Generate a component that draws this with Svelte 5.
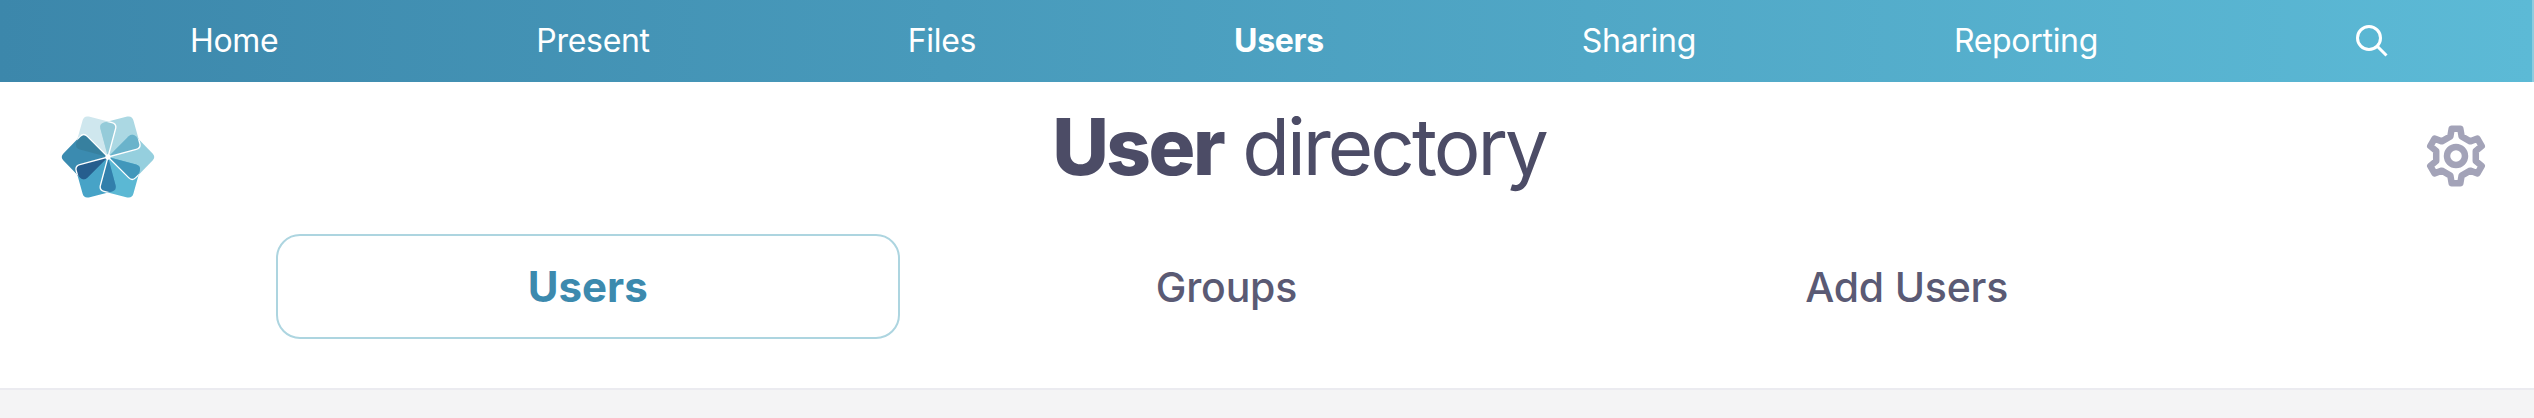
<script>
  const links = [
    { label: 'Home' },
    { label: 'Present' },
    { label: 'Files' },
    { label: 'Users', active: true },
    { label: 'Sharing' },
    { label: 'Reporting' }
  ];

  const petalPath = 'M0 0 L20.25 -20.25 Q23.75 -23.75 27.25 -20.25 L43.7 -3.5 Q47 0 43.7 3.5 L27.25 20.25 Q23.75 23.75 20.25 20.25 Z';
  const petals = [
    { a: -120, base: '#cfe7ee', over: '#95cbd9' },
    { a: -60, base: '#abd8e3', over: '#6ab3cb' },
    { a: 0, base: '#95cfde', over: '#4197bb' },
    { a: 60, base: '#5bb8d4', over: '#327fab' },
    { a: 120, base: '#47a3c7', over: '#265e8e' },
    { a: 180, base: '#3b8bb0', over: '#37809f' }
  ];

  function gearPath() {
    const cx = 31, cy = 31, outer = 27.6, inner = 20.4;
    const pt = (r, deg) => {
      const t = (deg * Math.PI) / 180;
      return `${(cx + r * Math.cos(t)).toFixed(2)} ${(cy + r * Math.sin(t)).toFixed(2)}`;
    };
    let d = '';
    for (let i = 0; i < 6; i++) {
      const a = -90 + i * 60;
      d += `${i ? 'L' : 'M'}${pt(inner, a - 16)} L${pt(outer, a - 9)} L${pt(outer, a + 9)} L${pt(inner, a + 16)} `;
    }
    return d + 'Z';
  }
  const gear = gearPath();
</script>

<div class="page">
  <nav class="nav">
    {#each links as l}
      <a class="link" class:on={l.active} href="#top">{l.label}</a>
    {/each}
    <span class="link">
      <svg width="32" height="32" viewBox="0 0 32 32" fill="none" stroke="#fff" stroke-width="3" aria-hidden="true">
        <circle cx="13" cy="13" r="11.5" />
        <path d="M21.5 21.5 L30.5 30.5" />
      </svg>
    </span>
  </nav>

  <header class="head">
    <svg class="logo" width="102" height="102" viewBox="-50 -50 100 100" aria-hidden="true">
      <defs>
        {#each petals as p, i}
          <clipPath id="petal-clip-{i}">
            <path d={petalPath} transform="rotate({p.a})" />
          </clipPath>
        {/each}
      </defs>
      {#each petals as p}
        <path d={petalPath} transform="rotate({p.a})" fill={p.base} />
      {/each}
      {#each petals as p, i}
        <g clip-path="url(#petal-clip-{(i + 1) % 6})">
          <path d={petalPath} transform="rotate({p.a})" fill={p.over} stroke="#fff" stroke-width="1.3" />
        </g>
      {/each}
      <circle r="2.6" fill="#fff" />
    </svg>
    <h1 class="title"><b>User</b> directory</h1>
    <svg class="gear" width="62" height="62" viewBox="0 0 62 62" fill="none" stroke="#a3a3b8" stroke-width="6.5" stroke-linejoin="round" aria-hidden="true">
      <circle cx="31" cy="31" r="9" />
      <path d={gear} />
    </svg>
  </header>

  <div class="tabs">
    <a class="tab on" href="#top">Users</a>
    <a class="tab" href="#top">Groups</a>
    <a class="tab" href="#top">Add Users</a>
  </div>
  <div class="rest"></div>
</div>

<style>
  :global(body) { margin: 0; background: #fff; }
  .page { font-family: Inter, "Liberation Sans", sans-serif; height: 418px; display: flex; flex-direction: column; overflow: hidden; }
  .nav { height: 82px; flex: none; box-sizing: border-box; padding: 0 15px 0 61px; display: flex; justify-content: space-around; align-items: center; background: linear-gradient(90deg, #3c87ab, #5cbad6); border-right: 2px solid #8ccde0; }
  .link { color: #fff; text-decoration: none; font-size: 32px; letter-spacing: -0.3px; line-height: 1; display: flex; justify-content: center; }
  .link.on { font-weight: 700; }
  .head { flex: none; height: 116px; position: relative; display: flex; justify-content: center; padding: 17px 0 0 64px; box-sizing: border-box; }
  .title { margin: 0; font-size: 78px; font-weight: 400; color: #4c4c66; line-height: 96px; letter-spacing: -3px; }
  .title b { font-weight: 800; letter-spacing: -2.5px; }
  .logo { position: absolute; left: 57px; top: 24px; }
  .gear { position: absolute; left: 2425px; top: 43px; }
  .tabs { flex: none; height: 192px; box-sizing: border-box; padding: 36px 0 0 2px; display: flex; justify-content: center; gap: 4px; align-items: flex-start; border-bottom: 2px solid #ebebf0; }
  .tab { height: 105px; padding: 0 250px; box-sizing: border-box; display: flex; align-items: center; font-size: 41px; font-weight: 500; color: #5a5a74; text-decoration: none; border: 2px solid transparent; border-radius: 24px; letter-spacing: -0.2px; }
  .tab.on { border-color: #add5e0; color: #3c8aae; font-weight: 700; font-size: 42px; letter-spacing: 0; }
  .rest { flex: 1; background: #f4f4f5; }
</style>
